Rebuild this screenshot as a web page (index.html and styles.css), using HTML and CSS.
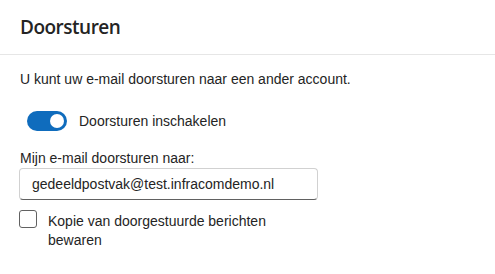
FILE: index.html
```html
<!DOCTYPE html>
<html lang="nl">
<head>
<meta charset="utf-8">
<link rel="stylesheet" href="styles.css">
</head>
<body>
<div class="panel">
  <header class="header">
    <h1 class="title">Doorsturen</h1>
  </header>
  <main class="content">
    <p class="intro">U kunt uw e-mail doorsturen naar een ander account.</p>
    <div class="toggle-row">
      <span class="toggle"><span class="knob"></span></span>
      <span class="toggle-label">Doorsturen inschakelen</span>
    </div>
    <label class="field-label">Mijn e-mail doorsturen naar:</label>
    <div class="input">gedeeldpostvak@test.infracomdemo.nl</div>
    <div class="check-row">
      <span class="checkbox"></span>
      <span class="check-label">Kopie van doorgestuurde berichten bewaren</span>
    </div>
  </main>
</div>
</body>
</html>
```
FILE: styles.css
```css
html, body {
  margin: 0;
  padding: 0;
  background: #ffffff;
}
body {
  font-family: "Liberation Sans", Arial, sans-serif;
  color: #242424;
  font-size: 14px;
}
.header {
  height: 54px;
  border-bottom: 1px solid #e6e6e6;
  padding: 0 20px;
  display: flex;
  align-items: center;
}
.title {
  margin: 0;
  font-family: "Open Sans", "Noto Sans", sans-serif;
  font-size: 19px;
  font-weight: 600;
  letter-spacing: -0.5px;
  line-height: 28px;
  margin-top: 0;
}
.content {
  padding: 14px 20px 0 20px;
}
.intro {
  margin: 0;
  line-height: 20px;
}
.toggle-row {
  display: flex;
  align-items: center;
  margin-top: 22px;
  padding-left: 7px;
  height: 20px;
}
.toggle {
  width: 40px;
  height: 20px;
  border-radius: 10px;
  background: #0f6cbd;
  display: flex;
  align-items: center;
  justify-content: flex-end;
  padding-right: 3px;
  box-sizing: border-box;
}
.knob {
  width: 14px;
  height: 14px;
  border-radius: 50%;
  background: #ffffff;
}
.toggle-label {
  margin-left: 12px;
  line-height: 20px;
}
.field-label {
  display: block;
  margin-top: 17px;
  line-height: 20px;
}
.input {
  margin-top: 0;
  width: 299px;
  height: 32px;
  box-sizing: border-box;
  border: 1px solid #d1d1d1;
  border-bottom-color: #616161;
  border-radius: 4px;
  padding: 0 12px;
  line-height: 30px;
  margin-left: -1px;
}
.check-row {
  display: flex;
  align-items: flex-start;
  margin-top: 10px;
  margin-left: -1px;
}
.checkbox {
  flex: none;
  width: 18px;
  height: 18px;
  box-sizing: border-box;
  border: 1px solid #616161;
  border-radius: 3px;
}
.check-label {
  margin-left: 11px;
  width: 240px;
  line-height: 19px;
  margin-top: 2px;
}
```
